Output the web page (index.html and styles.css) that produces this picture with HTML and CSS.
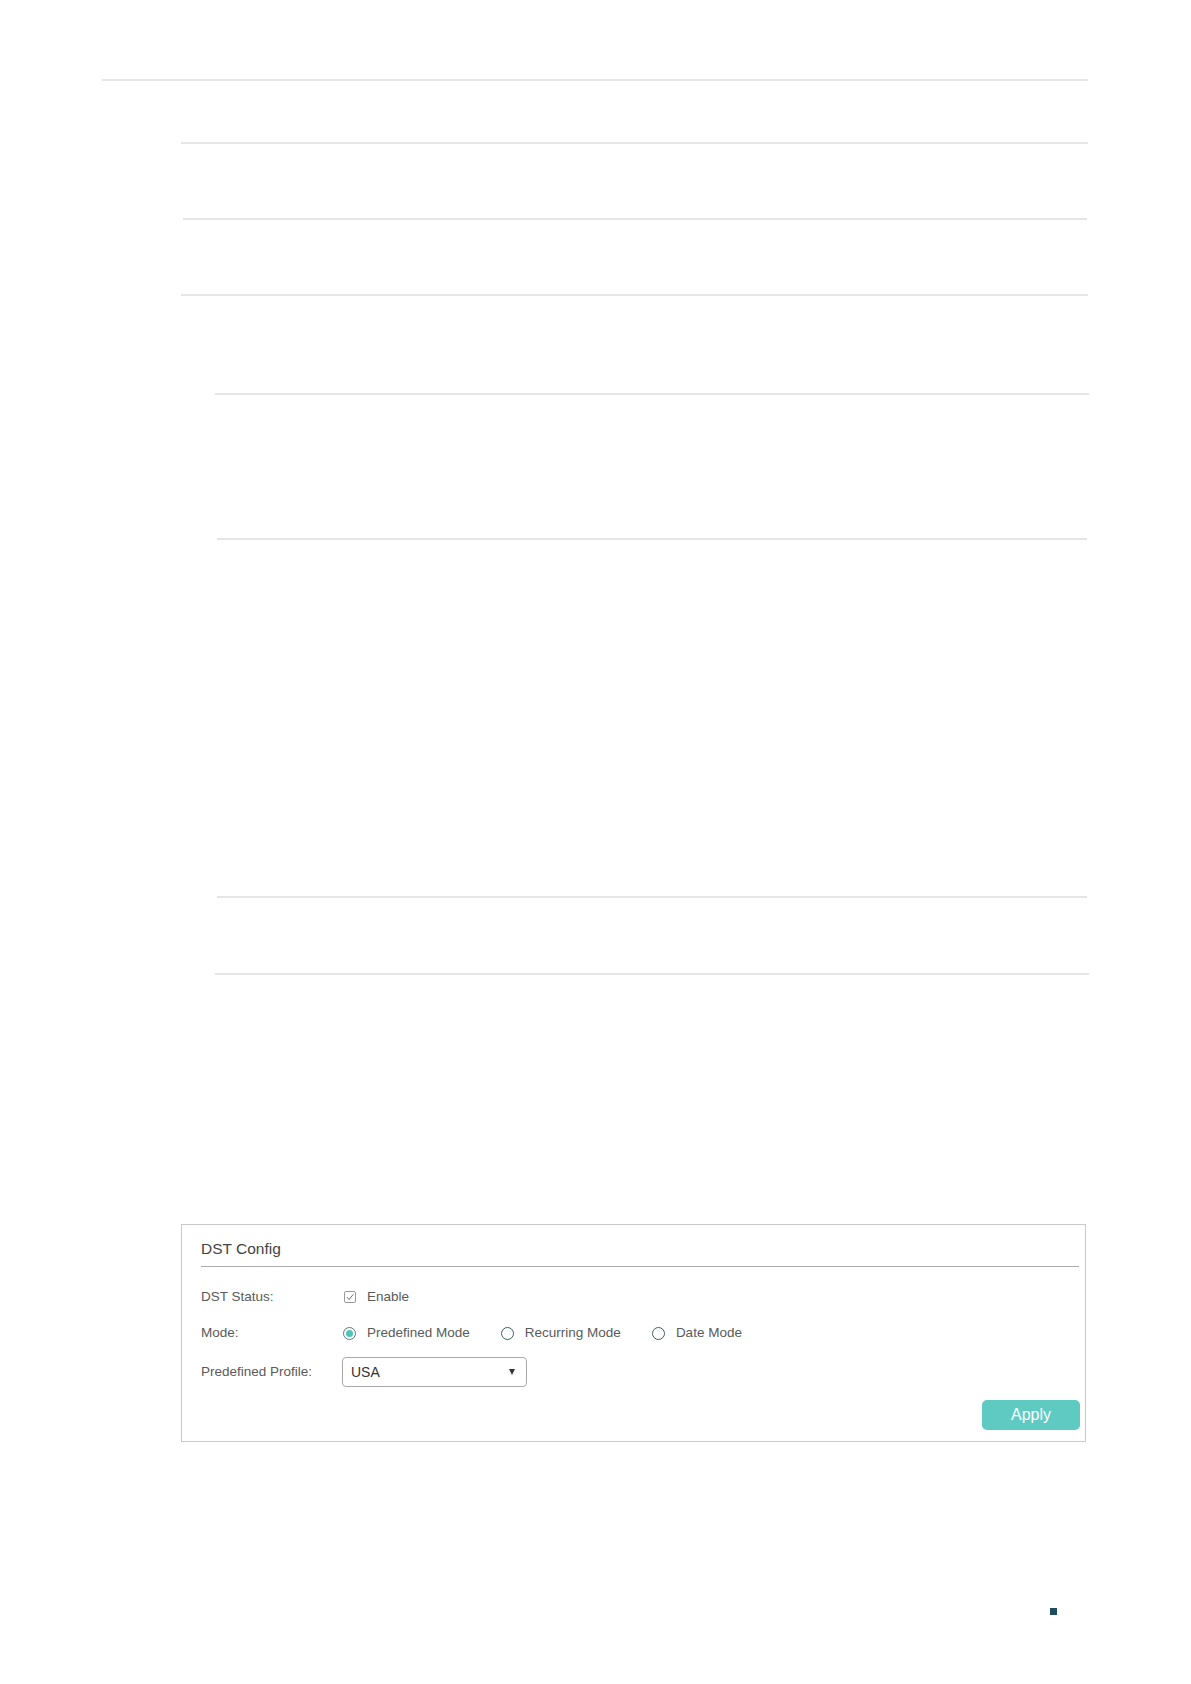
FILE: index.html
```html
<!DOCTYPE html>
<html lang="en">
<head>
<meta charset="utf-8">
<title>DST Config</title>
<link rel="stylesheet" href="styles.css">
</head>
<body>
<div class="page">
  <div class="rule r1"></div>
  <div class="rule r2"></div>
  <div class="rule r3"></div>
  <div class="rule r4"></div>
  <div class="rule r5"></div>
  <div class="rule r6"></div>
  <div class="rule r7"></div>
  <div class="rule r8"></div>

  <section class="panel">
    <div class="panel-title">DST Config</div>
    <div class="form">
      <div class="row">
        <span class="label">DST Status:</span>
        <div class="value">
          <span class="checkbox">
            <svg width="10" height="10" viewBox="0 0 10 10"><path d="M2 5.2 L4.1 7.5 L8.3 2.3" fill="none" stroke="#6f6f6f" stroke-width="1"/></svg>
          </span>
          <span class="opt-text">Enable</span>
        </div>
      </div>
      <div class="row row-mode">
        <span class="label">Mode:</span>
        <div class="value">
          <span class="radio-item"><span class="radio checked"></span><span class="opt-text">Predefined Mode</span></span>
          <span class="radio-item"><span class="radio"></span><span class="opt-text">Recurring Mode</span></span>
          <span class="radio-item"><span class="radio"></span><span class="opt-text">Date Mode</span></span>
        </div>
      </div>
      <div class="row row-profile">
        <span class="label">Predefined Profile:</span>
        <div class="value">
          <div class="select"><span class="select-text">USA</span><span class="caret"></span></div>
        </div>
      </div>
    </div>
    <div class="actions">
      <button class="apply" type="button">Apply</button>
    </div>
  </section>

  <div class="marker"></div>
</div>
</body>
</html>
```

FILE: styles.css
```css
html, body {
  margin: 0;
  padding: 0;
  background: #ffffff;
}

body {
  font-family: "Liberation Sans", Arial, sans-serif;
  color: #555555;
}

.page {
  width: 1191px;
  min-height: 1684px;
  display: flex;
  flex-direction: column;
  align-items: flex-start;
}

.rule {
  height: 2px;
  background: #e6e6e6;
}

.r1 { margin-top: 79px;  margin-left: 102px; width: 986px; }
.r2 { margin-top: 61px;  margin-left: 181px; width: 907px; }
.r3 { margin-top: 74px;  margin-left: 183px; width: 904px; }
.r4 { margin-top: 74px;  margin-left: 181px; width: 907px; }
.r5 { margin-top: 97px;  margin-left: 215px; width: 874px; }
.r6 { margin-top: 143px; margin-left: 217px; width: 870px; }
.r7 { margin-top: 356px; margin-left: 217px; width: 870px; }
.r8 { margin-top: 75px;  margin-left: 215px; width: 874px; }

.panel {
  box-sizing: border-box;
  margin-top: 249px;
  margin-left: 181px;
  width: 905px;
  border: 1px solid #c9c9c9;
  padding: 14px 6px 11px 19px;
  display: flex;
  flex-direction: column;
}

.panel-title {
  font-size: 15.5px;
  line-height: 20px;
  font-weight: normal;
  color: #444444;
  padding-bottom: 7px;
  border-bottom: 1px solid #ababab;
}

.form {
  margin-top: 20px;
  display: flex;
  flex-direction: column;
}

.row {
  display: flex;
  align-items: center;
  font-size: 13.5px;
  line-height: 20px;
}

.row-mode {
  margin-top: 16px;
}

.row-profile {
  margin-top: 14px;
}

.label {
  width: 141px;
  flex: none;
  color: #5a5a5a;
}

.value {
  display: flex;
  align-items: center;
}

.checkbox {
  box-sizing: border-box;
  width: 12px;
  height: 12px;
  margin-left: 2px;
  margin-right: 11px;
  border: 1px solid #999999;
  border-radius: 2px;
  display: flex;
  align-items: center;
  justify-content: center;
}

.opt-text {
  color: #5a5a5a;
}

.radio-item {
  display: flex;
  align-items: center;
  margin-right: 31px;
}

.radio-item:first-child {
  margin-left: 1px;
}

.radio {
  box-sizing: border-box;
  width: 13px;
  height: 13px;
  border: 1.3px solid #3f5f5f;
  border-radius: 50%;
  margin-right: 11px;
  display: flex;
  align-items: center;
  justify-content: center;
}

.radio.checked {
  border-color: #5a7a7a;
}

.radio.checked::after {
  content: "";
  width: 7px;
  height: 7px;
  border-radius: 50%;
  background: #4fc4ba;
}

.select {
  box-sizing: border-box;
  width: 185px;
  height: 30px;
  border: 1px solid #a8a8a8;
  border-radius: 4px;
  padding: 0 11px 0 8px;
  display: flex;
  align-items: center;
  justify-content: space-between;
}

.select-text {
  font-size: 14px;
  color: #333333;
}

.caret {
  width: 0;
  height: 0;
  border-left: 3.5px solid transparent;
  border-right: 3.5px solid transparent;
  border-top: 6px solid #333333;
}

.actions {
  margin-top: 13px;
  display: flex;
  justify-content: flex-end;
}

.apply {
  width: 98px;
  height: 30px;
  margin-right: -1px;
  border: none;
  border-radius: 5px;
  background: #5ecac2;
  color: #ffffff;
  font-family: "Liberation Sans", Arial, sans-serif;
  font-size: 16px;
  padding: 0;
}

.marker {
  margin-top: 166px;
  margin-left: 1050px;
  width: 7px;
  height: 7px;
  background: #1f4d5e;
}
```
